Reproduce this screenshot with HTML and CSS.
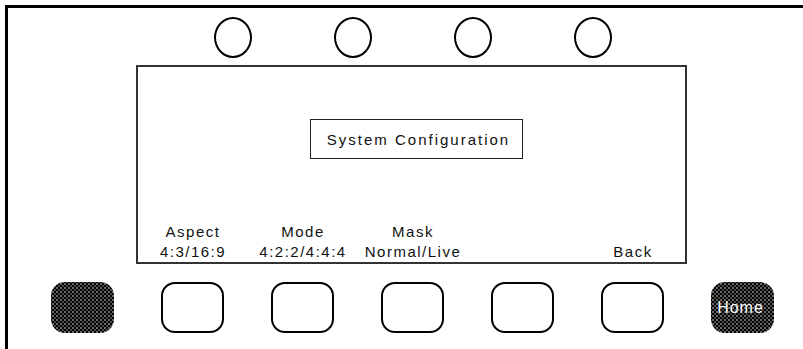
FILE: index.html
```html
<!DOCTYPE html>
<html lang="en">
<head>
    <meta charset="UTF-8">
    <meta name="viewport" content="width=device-width, initial-scale=1.0">
    <title>System Configuration</title>
    <link rel="stylesheet" href="styles.css">
</head>
<body>
    <div class="panel">
        <div class="knobs">
            <div class="knob"></div>
            <div class="knob"></div>
            <div class="knob"></div>
            <div class="knob"></div>
        </div>
        <div class="screen">
            <div class="title">System Configuration</div>
            <div class="labels">
                <div class="label">Aspect<br>4:3/16:9</div>
                <div class="label">Mode<br>4:2:2/4:4:4</div>
                <div class="label">Mask<br>Normal/Live</div>
                <div class="label"></div>
                <div class="label"><br>Back</div>
            </div>
        </div>
        <div class="keys">
            <button class="key dark"></button>
            <button class="key"></button>
            <button class="key"></button>
            <button class="key"></button>
            <button class="key"></button>
            <button class="key"></button>
            <button class="key dark">Home</button>
        </div>
    </div>
</body>
</html>
```

FILE: styles.css
```css
body {
    margin: 0;
    background: #fff;
    font-family: "Liberation Sans", Arial, sans-serif;
    color: #111;
    overflow: hidden;
}
.panel {
    margin: 5px 0 0 5px;
    height: 341px;
    border-top: 3px solid #000;
    border-left: 3px solid #000;
}
.knobs {
    display: flex;
    gap: 82px;
    padding: 9px 0 0 206px;
}
.knob {
    width: 38px;
    height: 41px;
    box-sizing: border-box;
    border: 2px solid #000;
    border-radius: 50%;
}
.screen {
    display: flex;
    flex-direction: column;
    width: 551px;
    height: 199px;
    box-sizing: border-box;
    margin: 7px 0 0 128px;
    border: 2px solid #333;
}
.title {
    width: 213px;
    height: 40px;
    box-sizing: border-box;
    margin: 52px 0 0 172px;
    border: 1.5px solid #222;
    display: flex;
    align-items: center;
    justify-content: center;
    font-size: 15px;
    letter-spacing: 2px;
    padding-left: 4px;
}
.labels {
    margin-top: auto;
    display: grid;
    grid-template-columns: repeat(5, 110px);
}
.label {
    text-align: center;
    font-size: 15px;
    line-height: 20px;
    letter-spacing: 1.5px;
}
.keys {
    display: flex;
    gap: 47px;
    padding: 18px 0 0 43px;
}
.key {
    width: 63px;
    height: 51px;
    padding: 0;
    box-sizing: border-box;
    border: 2px solid #000;
    border-radius: 14px;
    background: #fff;
    font-family: "Liberation Sans", Arial, sans-serif;
}
.key.dark {
    border: none;
    background-color: #000;
    background-image:
        radial-gradient(circle, #ddd 0.5px, transparent 0.9px),
        radial-gradient(circle, #999 0.5px, transparent 0.9px);
    background-size: 4px 4px;
    background-position: 0 0, 2px 2px;
    color: #fff;
    font-size: 16px;
    letter-spacing: 1px;
    text-align: center;
    padding-right: 4px;
}
```
